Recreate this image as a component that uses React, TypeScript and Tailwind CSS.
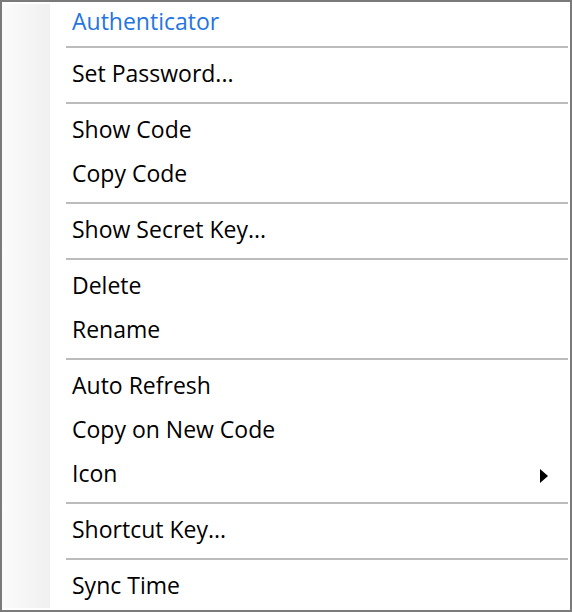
import React from "react";

type Entry = { kind: "item"; label: string; first?: boolean; blue?: boolean; sub?: boolean } | { kind: "sep" };

const entries: Entry[] = [
  { kind: "item", label: "Authenticator", first: true, blue: true },
  { kind: "sep" },
  { kind: "item", label: "Set Password..." },
  { kind: "sep" },
  { kind: "item", label: "Show Code" },
  { kind: "item", label: "Copy Code" },
  { kind: "sep" },
  { kind: "item", label: "Show Secret Key..." },
  { kind: "sep" },
  { kind: "item", label: "Delete" },
  { kind: "item", label: "Rename" },
  { kind: "sep" },
  { kind: "item", label: "Auto Refresh" },
  { kind: "item", label: "Copy on New Code" },
  { kind: "item", label: "Icon", sub: true },
  { kind: "sep" },
  { kind: "item", label: "Shortcut Key..." },
  { kind: "sep" },
  { kind: "item", label: "Sync Time" },
];

export default function App() {
  return (
    <div className="w-[572px] h-[612px] bg-white border-2 border-[#7a7a7a] flex flex-col pt-[3px] pb-[1px] relative overflow-hidden"
      style={{ fontFamily: '"Open Sans", "Noto Sans", sans-serif' }}>
      <div className="absolute left-0 top-[2px] bottom-[2px] w-[48px] bg-gradient-to-r from-[#fbfbfb] to-[#f0f0f0]" />
      <div className="relative flex flex-col">
        {entries.map((e, i) =>
          e.kind === "sep" ? (
            <div key={i} className="h-[12px] flex items-center pl-[64px] pr-[2px]">
              <div className="h-[2px] w-full bg-[#bcbcbc]" />
            </div>
          ) : (
            <div
              key={i}
              className={`${e.first ? "h-[36px]" : "h-[44px]"} flex items-center pl-[70px] pr-[22px] text-[23px] leading-none ${e.blue ? "text-[#2474e2]" : "text-black"}`}
            >
              <span className="flex-1 -mt-[3px]">{e.label}</span>
              {e.sub && (
                <svg width="8" height="14" viewBox="0 0 8 14" className="mt-[2px]">
                  <polygon points="0,0 8,7 0,14" fill="#000" />
                </svg>
              )}
            </div>
          )
        )}
      </div>
    </div>
  );
}
